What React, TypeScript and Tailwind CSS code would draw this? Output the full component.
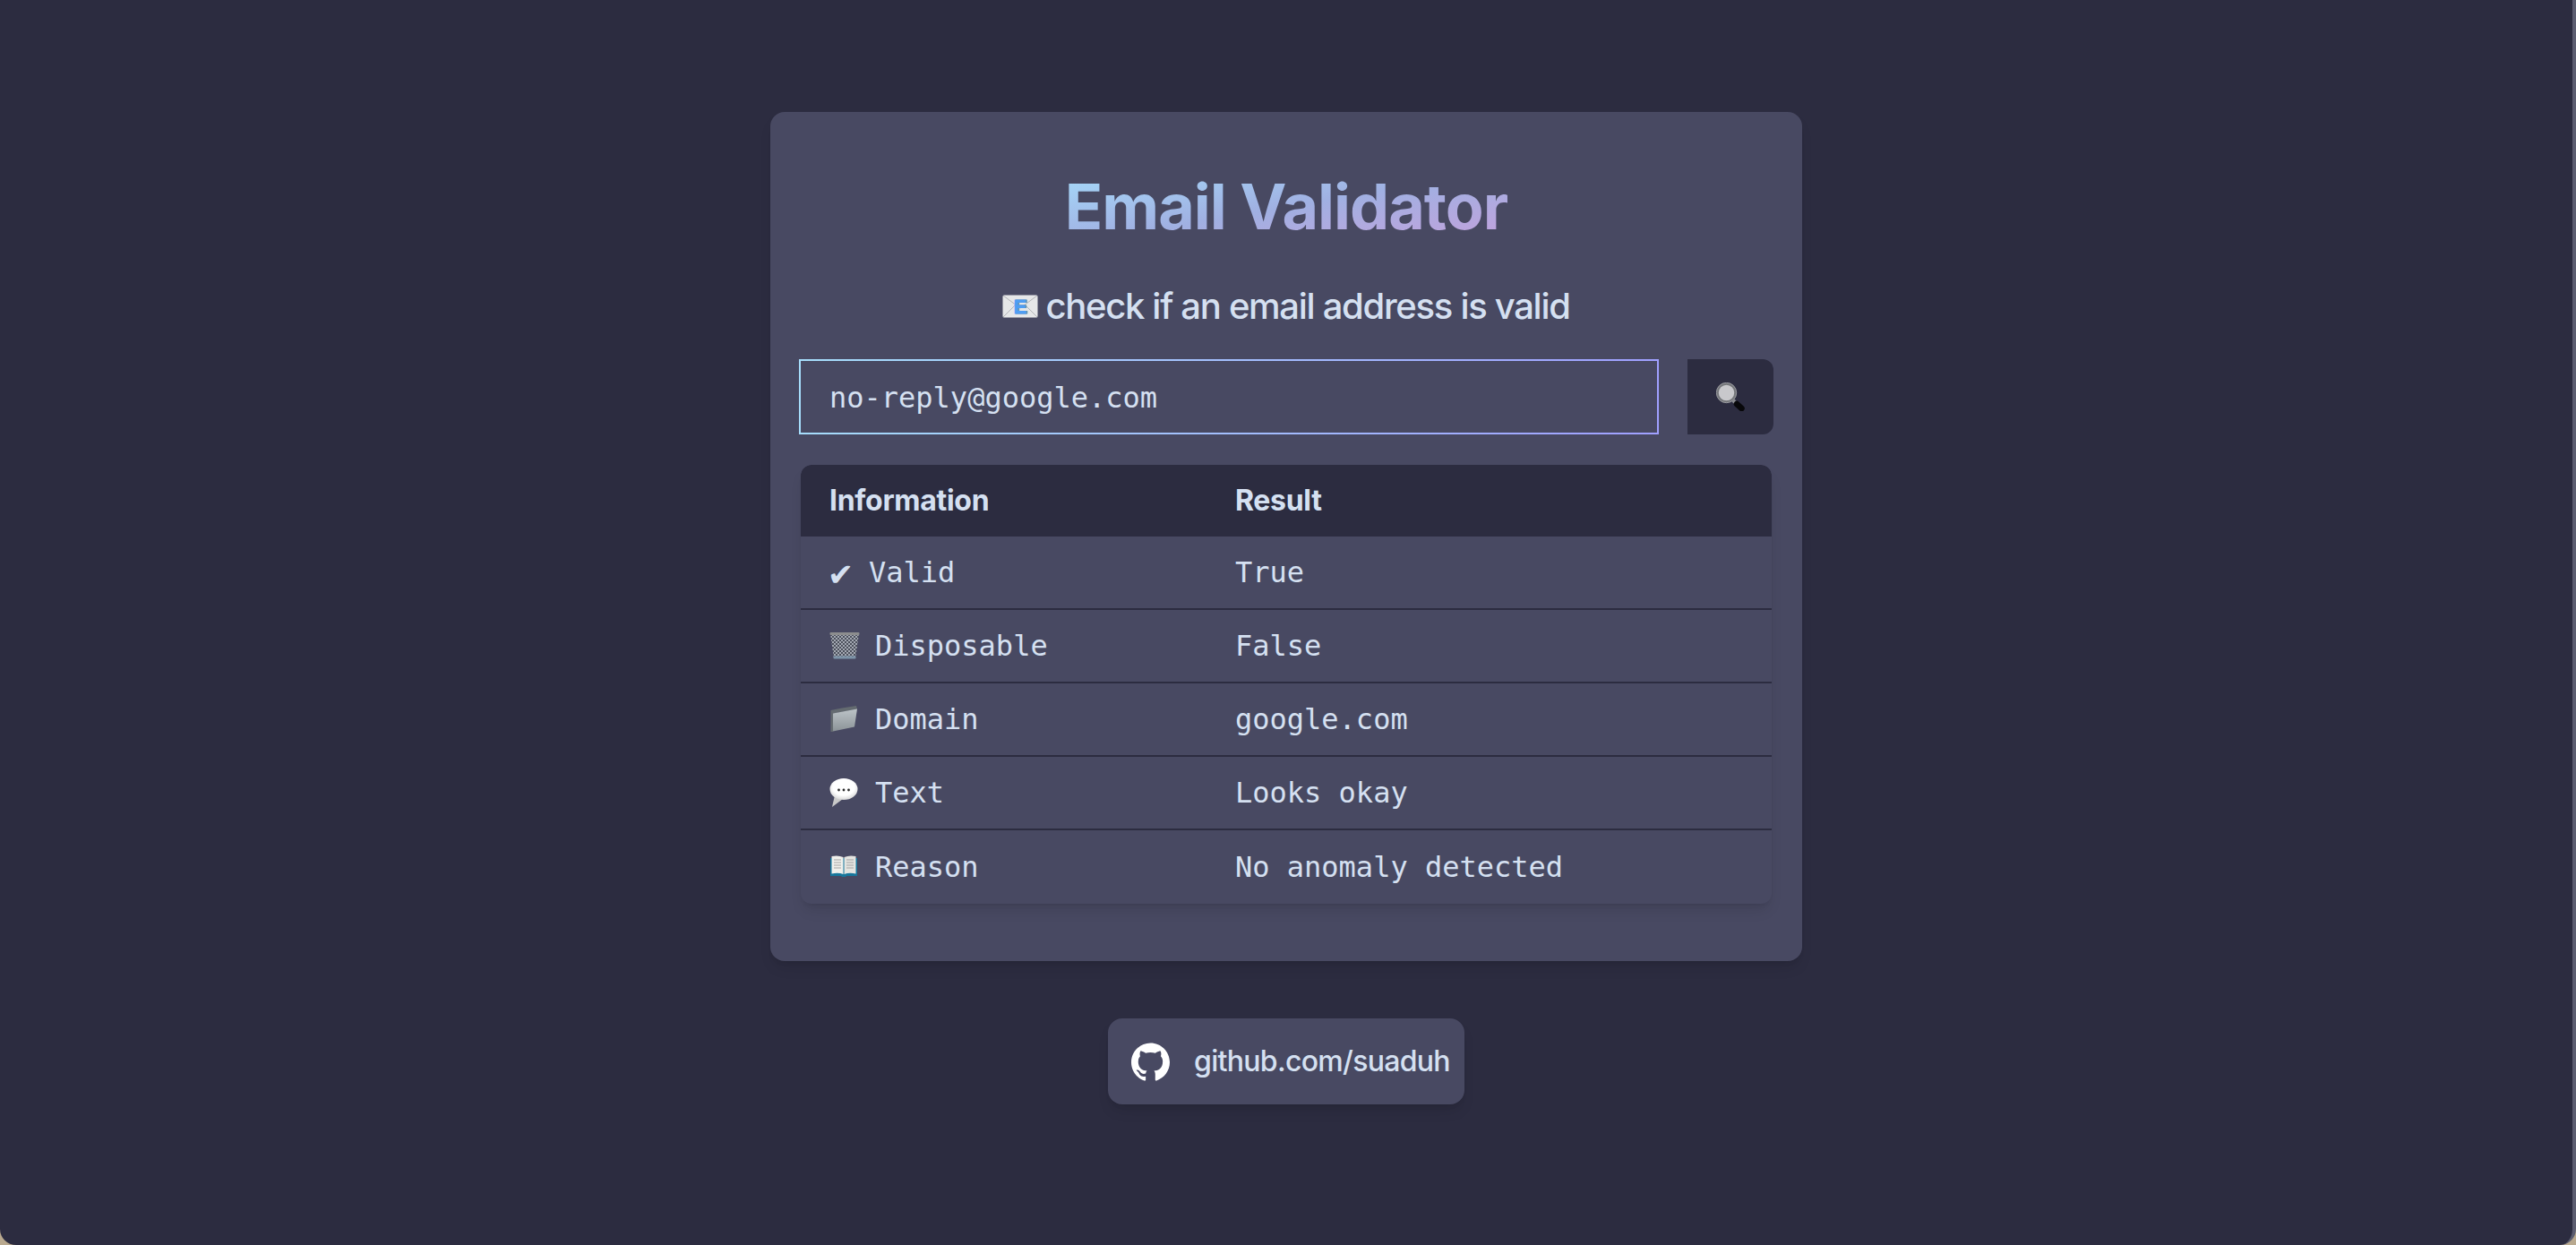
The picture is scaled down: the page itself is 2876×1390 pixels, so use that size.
import { SiGithub } from "react-icons/si";

const mono = "[font-family:'DejaVu_Sans_Mono',monospace]";

function MailIcon() {
  return (
    <svg viewBox="0 0 40 26" className="h-[26px] w-[40px] shrink-0">
      <rect x="0.5" y="0.5" width="39" height="25" rx="1.5" fill="#e6e7e8" />
      <path d="M1 1 L20 15 L39 1 M1 25 L15 11 M39 25 L25 11" fill="none" stroke="#b2b4b8" strokeWidth="1" />
      <text x="20.5" y="21" textAnchor="middle" fontSize="22" fontWeight="700" fill="#7d8894" stroke="#7d8894" strokeWidth="1" fontFamily="Liberation Sans">E</text>
      <text x="19.5" y="20.5" textAnchor="middle" fontSize="22" fontWeight="700" fill="#4f9df2" stroke="#4f9df2" strokeWidth="1" fontFamily="Liberation Sans">E</text>
    </svg>
  );
}

function SearchIcon() {
  return (
    <svg viewBox="0 0 32 32" className="h-[32px] w-[32px]">
      <path d="M19 20 L23 24" stroke="#8a8c90" strokeWidth="4" />
      <path d="M23 24 L28.5 29" stroke="#08080a" strokeWidth="6.5" strokeLinecap="round" />
      <circle cx="11.5" cy="11.5" r="10" fill="#c8c8cc" stroke="#74767a" strokeWidth="2.5" />
      <circle cx="11.5" cy="11.5" r="11.2" fill="none" stroke="#a8aaad" strokeWidth="0.8" />
    </svg>
  );
}

function TrashIcon() {
  return (
    <svg viewBox="0 0 34 32" className="h-[32px] w-[34px] shrink-0 -mr-[2px]">
      <defs>
        <pattern id="mesh" width="4" height="4" patternUnits="userSpaceOnUse">
          <rect width="4" height="4" fill="#4c505c" />
          <path d="M0 0 L4 4 M4 0 L0 4" stroke="#aeb3bd" strokeWidth="0.9" />
        </pattern>
      </defs>
      <path d="M1 2 H33 L29 30 H5 Z" fill="url(#mesh)" />
      <rect x="0.5" y="1" width="33" height="3" rx="1" fill="#8c8d8e" />
      <rect x="4.5" y="27.5" width="25" height="3" rx="1" fill="#7c93a8" />
    </svg>
  );
}

function FolderIcon() {
  return (
    <svg viewBox="0 0 32 32" className="h-[32px] w-[32px] shrink-0">
      <defs>
        <linearGradient id="folder" x1="0" y1="0" x2="0" y2="1">
          <stop offset="0" stopColor="#bdc4c8" />
          <stop offset="1" stopColor="#8b9397" />
        </linearGradient>
      </defs>
      <path d="M1.5 6 L14 3.5 L30 1 L31 5 L4 9.5 L4 30 L1.5 30 Z" fill="#646b70" />
      <path d="M4 9.5 L31 4.5 L28 24.5 L4 29.5 Z" fill="url(#folder)" />
    </svg>
  );
}

function BubbleIcon() {
  return (
    <svg viewBox="0 0 32 32" className="h-[32px] w-[32px] shrink-0">
      <defs>
        <radialGradient id="bubble" cx="0.5" cy="0.4" r="0.65">
          <stop offset="0.6" stopColor="#ffffff" />
          <stop offset="1" stopColor="#cfcfcf" />
        </radialGradient>
      </defs>
      <path d="M6 19 L3 32 L15 23 Z" fill="#c9c9c9" />
      <ellipse cx="16" cy="12" rx="15.5" ry="12" fill="url(#bubble)" />
      <circle cx="10.5" cy="13" r="1.4" fill="#2b2b2b" />
      <circle cx="16" cy="13" r="1.4" fill="#2b2b2b" />
      <circle cx="21.5" cy="13" r="1.4" fill="#2b2b2b" />
    </svg>
  );
}

function BookIcon() {
  return (
    <svg viewBox="0 0 32 32" className="h-[32px] w-[32px] shrink-0">
      <path d="M1 6 V26 H13 L14 27 H18 L19 26 H31 V6 Z" fill="#17769b" />
      <path d="M2.5 4 Q10 2.5 15.5 5 V24 Q10 22 2.5 23.5 Z" fill="#f0f0ec" />
      <path d="M29.5 4 Q22 2.5 16.5 5 V24 Q22 22 29.5 23.5 Z" fill="#e4e4e0" />
      <path d="M5 8 H13 M5 11 H13 M5 14 H13 M5 17 H13 M19 8 H27 M19 11 H27 M19 14 H27 M19 17 H27" stroke="#a4a4a4" strokeWidth="1" />
    </svg>
  );
}

const rows = [
  {
    icon: <span className="inline-block w-[25px] text-center text-[40px] leading-none">✔</span>,
    label: "Valid",
    value: "True",
  },
  { icon: <TrashIcon />, label: "Disposable", value: "False" },
  { icon: <FolderIcon />, label: "Domain", value: "google.com" },
  { icon: <BubbleIcon />, label: "Text", value: "Looks okay" },
  { icon: <BookIcon />, label: "Reason", value: "No anomaly detected" },
];

export default function App() {
  return (
    <div className="h-[1390px] overflow-hidden bg-[#b9a98f]">
      <main className="flex h-full flex-col items-center rounded-b-[18px] border-r-[4px] border-[#5c5d70] bg-[#2c2c40] pt-[125px] font-['Inter',sans-serif] text-[#d5e0f1]">
        <section className="flex h-[948px] w-[1152px] flex-col rounded-[16px] bg-[#484962] px-[32px] pt-[64px] shadow-lg">
          <h1 className="self-center bg-gradient-to-br from-[#a5dcfb] via-[#a0b0e2] to-[#c4a0dc] bg-clip-text text-[70px] leading-[84px] font-bold tracking-[-1px] text-transparent">
            Email Validator
          </h1>
          <p className="mt-[45px] flex items-center justify-center gap-[8px] text-[40px] leading-[48px] font-medium tracking-[-1.3px]">
            <MailIcon />
            check if an email address is valid
          </p>
          <form className="mt-[35px] flex gap-[32px]" onSubmit={(e) => e.preventDefault()}>
            <input
              defaultValue="no-reply@google.com"
              className={`h-[84px] min-w-0 flex-1 border-2 bg-transparent px-[32px] pt-[2px] text-[32px] text-[#d5e0f1] outline-none [border-image:linear-gradient(to_right,#a6ddfb,#a0a0ff)_1] ${mono}`}
            />
            <button type="submit" className="flex h-[84px] w-[96px] items-center justify-center rounded-r-[12px] bg-[#2c2c40]">
              <SearchIcon />
            </button>
          </form>
          <div className="mx-[2px] mt-[34px] overflow-hidden rounded-[12px] shadow-lg">
            <div className="flex h-[80px] items-center rounded-t-[12px] bg-[#2c2c40] text-[32px] font-bold tracking-[-0.3px]">
              <div className="w-[453px] pl-[32px]">Information</div>
              <div className="pl-[32px]">Result</div>
            </div>
            {rows.map((row, i) => (
              <div
                key={row.label}
                className={`flex h-[82px] items-center text-[32px] ${mono} ${i < rows.length - 1 ? "border-b-2 border-[#2c2c40]" : ""}`}
              >
                <div className="flex w-[453px] items-center gap-[19px] pl-[32px]">
                  {row.icon}
                  <span>{row.label}</span>
                </div>
                <div className="pl-[32px]">{row.value}</div>
              </div>
            ))}
          </div>
        </section>
        <a
          href="#"
          className="mt-[64px] flex h-[96px] w-[398px] items-center gap-[27px] rounded-[16px] bg-[#484962] pl-[26px] text-[32px] font-medium tracking-[-0.7px] shadow-lg"
        >
          <SiGithub className="size-[43px] shrink-0 text-white" />
          github.com/suaduh
        </a>
      </main>
    </div>
  );
}
